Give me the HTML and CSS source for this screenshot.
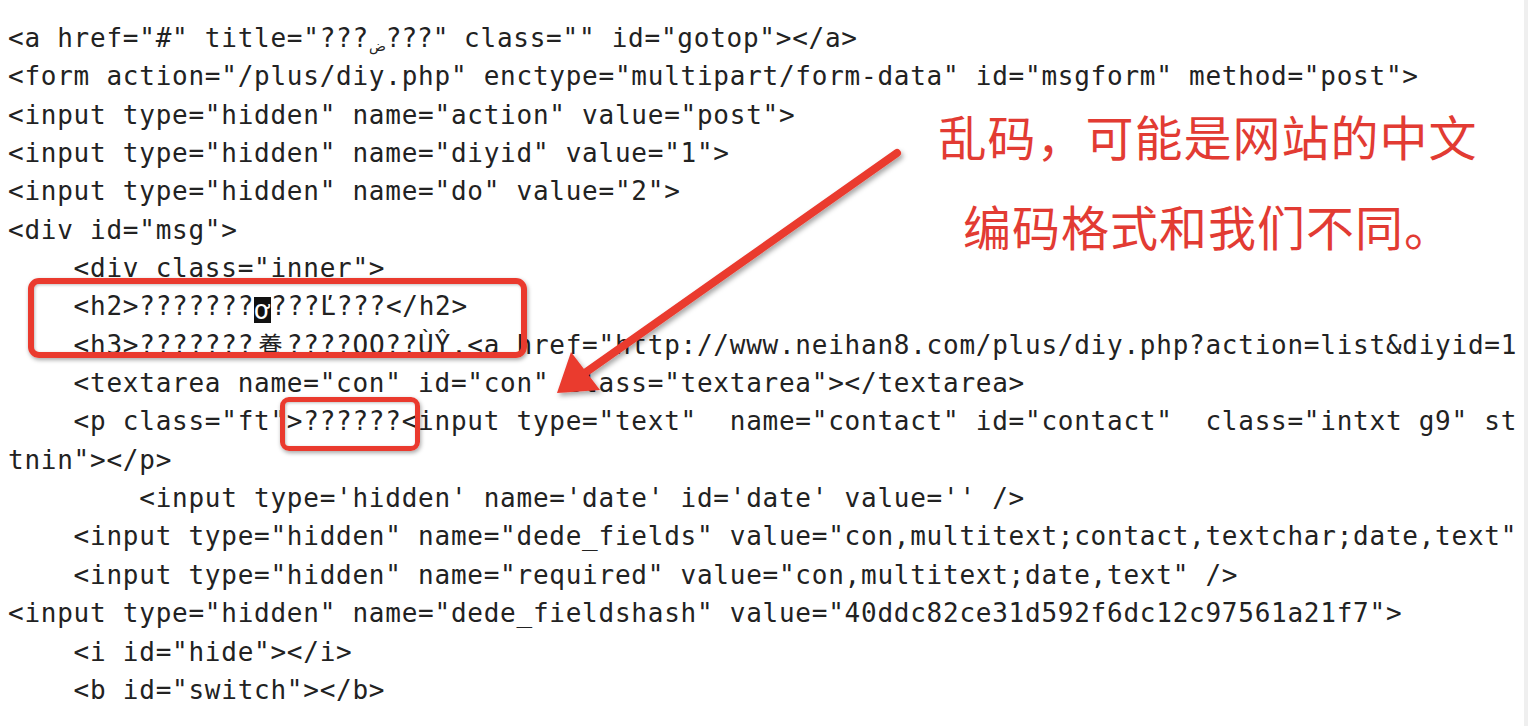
FILE: index.html
```html
<!DOCTYPE html>
<html lang="zh-CN">
<head>
<meta charset="utf-8">
<title>源码乱码</title>
<link rel="stylesheet" href="styles.css">
</head>
<body>
<div class="page">
<div class="code">
<div class="ln">&lt;a href="#" title="???<span class="ar">ض</span>???" class="" id="gotop"&gt;&lt;/a&gt;</div>
<div class="ln">&lt;form action="/plus/diy.php" enctype="multipart/form-data" id="msgform" method="post"&gt;</div>
<div class="ln">&lt;input type="hidden" name="action" value="post"&gt;</div>
<div class="ln">&lt;input type="hidden" name="diyid" value="1"&gt;</div>
<div class="ln">&lt;input type="hidden" name="do" value="2"&gt;</div>
<div class="ln">&lt;div id="msg"&gt;</div>
<div class="ln">    &lt;div class="inner"&gt;</div>
<div class="ln">    &lt;h2&gt;???????<span class="inv">ơ</span>???Ľ???&lt;/h2&gt;</div>
<div class="ln">    &lt;h3&gt;???????<span class="wide">養</span>????QQ??ÙŶ,&lt;a href="http://www.neihan8.com/plus/diy.php?action=list&amp;diyid=1" target="_blank"&gt;</div>
<div class="ln">    &lt;textarea name="con" id="con" class="textarea"&gt;&lt;/textarea&gt;</div>
<div class="ln">    &lt;p class="ft"&gt;??????&lt;input type="text"  name="contact" id="contact"  class="intxt g9" style="width:300px" onfocus="this.className='intxt g3'" onblur="this.className='intxt g9'"</div>
<div class="ln">tnin"&gt;&lt;/p&gt;</div>
<div class="ln">        &lt;input type='hidden' name='date' id='date' value='' /&gt;</div>
<div class="ln">    &lt;input type="hidden" name="dede_fields" value="con,multitext;contact,textchar;date,text" /&gt;</div>
<div class="ln">    &lt;input type="hidden" name="required" value="con,multitext;date,text" /&gt;</div>
<div class="ln">&lt;input type="hidden" name="dede_fieldshash" value="40ddc82ce31d592f6dc12c97561a21f7"&gt;</div>
<div class="ln">    &lt;i id="hide"&gt;&lt;/i&gt;</div>
<div class="ln">    &lt;b id="switch"&gt;&lt;/b&gt;</div>
</div>

<div class="mark mark-title"></div>
<div class="mark mark-p"></div>

<svg class="arrow" width="1528" height="726" viewBox="0 0 1528 726" aria-hidden="true">
  <defs>
    <filter id="sh" x="-20%" y="-20%" width="140%" height="140%">
      <feDropShadow dx="2" dy="3" stdDeviation="2.5" flood-color="#000" flood-opacity="0.35"/>
    </filter>
  </defs>
  <g filter="url(#sh)">
    <line x1="897" y1="153" x2="582" y2="375" stroke="#ea3a2e" stroke-width="8" stroke-linecap="round"/>
    <polygon points="557,393 571,352 600,390" fill="#ea3a2e"/>
  </g>
</svg>

<div class="note">
  <div>乱码，可能是网站的中文</div>
  <div>编码格式和我们不同。</div>
</div>
</div>
</body>
</html>
```

FILE: styles.css
```css
html, body {
  margin: 0;
  padding: 0;
  background: #ffffff;
}

.page {
  position: relative;
  width: 1524px;
  height: 726px;
  overflow: hidden;
  border-right: 4px solid #efefef;
  background: #ffffff;
}

.code {
  box-sizing: border-box;
  width: 1518px;
  margin: 0;
  padding: 19px 0 0 8px;
  font-family: "DejaVu Sans Mono", "Noto Sans CJK SC", monospace;
  font-size: 26px;
  letter-spacing: 0.75px;
  color: #222222;
  overflow: hidden;
}

.ln {
  height: 38.35px;
  line-height: 38.35px;
  white-space: pre;
}

.ar {
  font-family: "DejaVu Sans", sans-serif;
  font-size: 14px;
  line-height: 14px;
  letter-spacing: 0;
  vertical-align: -4px;
}

.inv {
  display: inline-block;
  width: 17px;
  background: #111111;
  color: #ffffff;
  text-align: center;
  line-height: 26px;
  vertical-align: -4px;
  letter-spacing: 0;
}

.wide {
  display: inline-block;
  width: 32.8px;
  text-align: center;
  font-family: "Noto Sans CJK SC", sans-serif;
  font-size: 24px;
  letter-spacing: 0;
  line-height: 28px;
}

.mark {
  position: absolute;
  border: 6px solid #ea3a2e;
  border-radius: 11px;
  box-shadow: 1px 2px 4px rgba(0, 0, 0, 0.35), inset 1px 1px 3px rgba(0, 0, 0, 0.25);
}

.mark-title {
  left: 28px;
  top: 278px;
  width: 487px;
  height: 68px;
}

.mark-p {
  left: 280px;
  top: 397px;
  width: 130px;
  height: 44px;
  border-width: 5px;
  border-radius: 9px;
}

.arrow {
  position: absolute;
  left: 0;
  top: 0;
  pointer-events: none;
}

.note {
  position: absolute;
  left: 918px;
  top: 90px;
  width: 580px;
  text-align: center;
  font-family: "Noto Sans CJK SC", sans-serif;
  font-size: 48px;
  line-height: 90px;
  color: #e23b33;
  letter-spacing: 1px;
}
```
